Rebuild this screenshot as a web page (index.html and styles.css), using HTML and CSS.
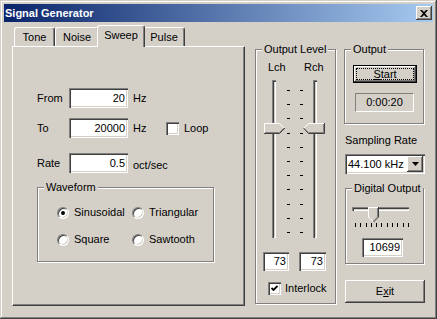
FILE: index.html
```html
<!DOCTYPE html>
<html lang="en">
<head>
<meta charset="UTF-8">
<meta name="viewport" content="width=device-width, initial-scale=1.0">
<title>Signal Generator</title>
<link rel="stylesheet" href="styles.css">
</head>
<body>
<div class="window">
  <div class="titlebar">
    <span class="title">Signal Generator</span>
    <div class="close-btn">
      <svg width="8" height="7" viewBox="0 0 8 7"><path d="M0 0 L2 0 L4 2 L6 0 L8 0 L5 3.5 L8 7 L6 7 L4 5 L2 7 L0 7 L3 3.5 Z" fill="#000"/></svg>
    </div>
  </div>

  <div class="client">
    <!-- tab control -->
    <div class="tab-col">
      <div class="tabstrip">
        <div class="tab tab-tone">Tone</div>
        <div class="tab tab-noise">Noise</div>
        <div class="tab tab-sweep active">Sweep</div>
        <div class="tab tab-pulse">Pulse</div>
      </div>
      <div class="tab-panel">
        <div class="field-row">
          <span class="field-label">From</span>
          <div class="edit">20</div>
          <span class="unit">Hz</span>
        </div>
        <div class="field-row row-to">
          <span class="field-label">To</span>
          <div class="edit">20000</div>
          <span class="unit">Hz</span>
          <div class="check-item">
            <span class="checkbox"></span>
            <span>Loop</span>
          </div>
        </div>
        <div class="field-row row-rate">
          <span class="field-label">Rate</span>
          <div class="edit">0.5</div>
          <span class="unit unit-low">oct/sec</span>
        </div>

        <div class="group waveform">
          <div class="group-label">Waveform</div>
          <div class="radio-grid">
            <div class="radio-item"><span class="radio checked"></span>Sinusoidal</div>
            <div class="radio-item"><span class="radio"></span>Triangular</div>
            <div class="radio-item"><span class="radio"></span>Square</div>
            <div class="radio-item"><span class="radio"></span>Sawtooth</div>
          </div>
        </div>
      </div>
    </div>

    <!-- output level -->
    <div class="group level">
      <div class="group-label">Output Level</div>
      <div class="chan-labels"><span>Lch</span><span>Rch</span></div>
      <div class="sliders">
        <div class="vslider">
          <div class="vtrack"></div>
          <svg class="vthumb" width="22" height="11" viewBox="0 0 22 11">
            <polygon points="0,0 16,0 21,5 16,11 0,11" fill="#d4d0c8"/>
            <polyline points="0.5,10 0.5,0.5 15.5,0.5 20.5,5.5" fill="none" stroke="#fff"/>
            <polyline points="0,10.5 15.5,10.5 21,5" fill="none" stroke="#404040"/>
            <polyline points="1,9.5 15.5,9.5 19.8,5.2" fill="none" stroke="#808080"/>
          </svg>
        </div>
        <div class="ticks ticks-l">
          <i></i><i></i><i></i><i></i><i></i><i></i><i></i><i></i><i></i><i></i><i></i>
        </div>
        <div class="ticks ticks-r">
          <i></i><i></i><i></i><i></i><i></i><i></i><i></i><i></i><i></i><i></i><i></i>
        </div>
        <div class="vslider vslider-r">
          <div class="vtrack"></div>
          <svg class="vthumb" width="22" height="11" viewBox="0 0 22 11">
            <polygon points="0,5 5,0 22,0 22,11 5,11" fill="#d4d0c8"/>
            <polyline points="0.5,5.5 5.5,0.5 21,0.5" fill="none" stroke="#fff"/>
            <polyline points="0.5,5 5.5,10.5 21.5,10.5 21.5,0" fill="none" stroke="#404040"/>
            <polyline points="1.5,5.5 5.5,9.5 20.5,9.5 20.5,1" fill="none" stroke="#808080"/>
          </svg>
        </div>
      </div>
      <div class="level-values">
        <div class="edit edit-l">73</div>
        <div class="edit edit-r">73</div>
      </div>
      <div class="check-item interlock">
        <span class="checkbox">
          <svg width="7" height="7" viewBox="0 0 7 7"><polyline points="0.5,3 2.5,5 6.5,1" fill="none" stroke="#000" stroke-width="1.8"/></svg>
        </span>
        <span>Interlock</span>
      </div>
    </div>

    <!-- right column -->
    <div class="right-col">
      <div class="group output">
        <div class="group-label">Output</div>
        <div class="btn btn-default btn-start"><span class="focus-ring"><u>S</u>tart</span></div>
        <div class="time-box">0:00:20</div>
      </div>

      <div class="rate-label">Sampling Rate</div>
      <div class="combo">
        <span class="combo-text">44.100 kHz</span>
        <span class="combo-btn">
          <svg width="7" height="4" viewBox="0 0 7 4"><polygon points="0,0 7,0 3.5,4" fill="#000"/></svg>
        </span>
      </div>

      <div class="group digital">
        <div class="group-label">Digital Output</div>
        <div class="hslider">
          <div class="htrack"></div>
          <svg class="hthumb" width="11" height="15" viewBox="0 0 11 15">
            <polygon points="0,0 11,0 11,10 5.5,15 0,10" fill="#d4d0c8"/>
            <polyline points="0.5,10 0.5,0.5 10,0.5" fill="none" stroke="#fff"/>
            <polyline points="0.5,10 5,14.5" fill="none" stroke="#fff"/>
            <polyline points="10.5,0 10.5,10 5.5,15" fill="none" stroke="#404040"/>
            <polyline points="9.5,1 9.5,10 5.5,14" fill="none" stroke="#808080"/>
          </svg>
        </div>
        <div class="hticks">
          <i></i><i></i><i></i><i></i><i></i><i></i><i></i><i></i><i></i><i></i><i></i>
        </div>
        <div class="edit edit-digital">10699</div>
      </div>

      <div class="btn btn-exit">E<u>x</u>it</div>
    </div>
  </div>
</div>
</body>
</html>
```

FILE: styles.css
```css
body {
  margin: 0;
  background: #d4d0c8;
  font-family: "Liberation Sans", Arial, sans-serif;
  font-size: 11px;
  line-height: 13px;
  color: #000;
}

/* window frame */
.window {
  width: 437px;
  height: 319px;
  box-sizing: border-box;
  padding: 4px;
  background: #d4d0c8;
  box-shadow: inset -1px -1px #404040, inset 1px 1px #d4d0c8, inset -2px -2px #808080, inset 2px 2px #fff;
}

.titlebar {
  height: 18px;
  display: flex;
  align-items: center;
  justify-content: space-between;
  padding: 0 1px 0 1px;
  background: linear-gradient(to right, #0a246a, #a6caf0);
  color: #fff;
  font-weight: bold;
}

.close-btn {
  width: 16px;
  height: 14px;
  box-sizing: border-box;
  background: #d4d0c8;
  box-shadow: inset -1px -1px #404040, inset 1px 1px #fff, inset -2px -2px #808080;
  display: flex;
  align-items: center;
  justify-content: center;
}

.client {
  display: flex;
  align-items: flex-start;
  padding: 3px 0 0 8px;
}

/* tabs */
.tab-col {
  width: 233px;
}

.tabstrip {
  display: flex;
  align-items: flex-end;
  height: 21px;
  padding-left: 2px;
}

.tab {
  box-sizing: border-box;
  height: 19px;
  padding-top: 3px;
  text-align: center;
  background: #d4d0c8;
  border-top: 1px solid #fff;
  border-left: 1px solid #fff;
  border-right: 1px solid #404040;
  border-radius: 3px 3px 0 0;
  box-shadow: inset -1px 0 #808080;
}

.tab-tone { width: 41px; }
.tab-noise { width: 44px; }
.tab-sweep { width: 44px; }
.tab-pulse { width: 42px; }

.tab.active {
  position: relative;
  z-index: 1;
  width: 48px;
  height: 22px;
  margin: 0 -2px -1px;
  padding-top: 3px;
}

.tab-panel {
  box-sizing: border-box;
  height: 260px;
  border: 1px solid;
  border-color: #fff #404040 #404040 #fff;
  box-shadow: inset -1px -1px #808080;
  padding: 41px 0 0 24px;
}

.field-row {
  display: flex;
  align-items: center;
  height: 20px;
}

.row-to { margin-top: 10px; }
.row-rate { margin-top: 15px; }

.field-label {
  width: 32px;
}

.edit {
  box-sizing: border-box;
  width: 59px;
  height: 20px;
  padding-right: 3px;
  line-height: 20px;
  text-align: right;
  background: #fff;
  box-shadow: inset 1px 1px #808080, inset 2px 2px #404040, inset -1px -1px #fff, inset -2px -2px #d4d0c8;
}

.unit {
  min-width: 28px;
  margin-left: 5px;
}

.unit-low {
  padding-top: 5px;
}

.check-item {
  display: flex;
  align-items: center;
  gap: 5px;
  margin-left: 5px;
}

.checkbox {
  width: 13px;
  height: 13px;
  box-sizing: border-box;
  background: #fff;
  box-shadow: inset 1px 1px #808080, inset 2px 2px #404040, inset -1px -1px #fff, inset -2px -2px #d4d0c8;
  display: flex;
  align-items: center;
  justify-content: center;
}

/* group boxes */
.group {
  box-sizing: border-box;
  border: 1px solid #808080;
  box-shadow: inset 1px 1px #fff, 1px 1px #fff;
}

.group-label {
  width: fit-content;
  margin: -7px 0 0 6px;
  padding: 0 2px;
  background: #d4d0c8;
}

.waveform {
  width: 177px;
  height: 75px;
  margin-top: 14px;
}

.radio-grid {
  display: grid;
  grid-template-columns: 75px auto;
  row-gap: 14px;
  padding: 12px 0 0 19px;
}

.radio-item {
  display: flex;
  align-items: center;
  gap: 5px;
  height: 13px;
}

.radio {
  width: 12px;
  height: 12px;
  box-sizing: border-box;
  border-radius: 50%;
  border: 1px solid;
  border-color: #808080 #fff #fff #808080;
  box-shadow: inset 1px 1px #404040, inset -1px -1px #d4d0c8;
  background: #fff;
  display: flex;
  align-items: center;
  justify-content: center;
}

.radio.checked::after {
  content: "";
  width: 4px;
  height: 4px;
  border-radius: 50%;
  background: #000;
}

/* output level */
.level {
  width: 81px;
  height: 255px;
  margin: 24px 0 0 10px;
}

.chan-labels {
  display: flex;
  margin-top: 5px;
  padding-left: 12px;
}

.chan-labels span:first-child {
  width: 36px;
}

.sliders {
  display: flex;
  height: 158px;
  margin: 6px 0 0 8px;
}

.vslider {
  position: relative;
  width: 22px;
}

.vtrack {
  width: 4px;
  height: 100%;
  margin-left: 8px;
  box-sizing: border-box;
  box-shadow: inset 1px 1px #808080, inset 2px 2px #404040, inset -1px -1px #fff, inset -2px -2px #d4d0c8;
}

.vslider-r .vtrack {
  margin-left: 10px;
}

.vthumb {
  position: absolute;
  top: 43px;
  left: 0;
}

.ticks {
  display: flex;
  flex-direction: column;
  justify-content: space-between;
  width: 3px;
  box-sizing: border-box;
  padding: 10px 0 5px;
}

.ticks i {
  display: block;
  height: 1px;
  background: #000;
}

.ticks-l { margin-left: 1px; }
.ticks-r { margin-left: 10px; }

.level-values {
  display: flex;
  gap: 10px;
  margin: 14px 0 0 7px;
}

.level-values .edit {
  height: 19px;
  line-height: 19px;
}

.edit-l { width: 26px; }
.edit-r { width: 27px; }

.interlock {
  margin: 11px 0 0 12px;
  gap: 4px;
}

/* right column */
.right-col {
  width: 81px;
  margin: 24px 0 0 8px;
}

.output {
  width: 80px;
  height: 75px;
}

.btn {
  box-sizing: border-box;
  background: #d4d0c8;
  box-shadow: inset -1px -1px #404040, inset 1px 1px #fff, inset -2px -2px #808080;
  display: flex;
  align-items: center;
  justify-content: center;
}

.btn-default {
  border: 1px solid #000;
  padding: 2px;
  box-shadow: inset -1px -1px #404040, inset 1px 1px #fff, inset -2px -2px #808080;
}

.btn-start {
  width: 64px;
  height: 18px;
  margin: 9px 0 0 8px;
}

.focus-ring {
  flex: 1;
  align-self: stretch;
  display: flex;
  align-items: center;
  justify-content: center;
  border: 1px dotted #000;
}

.time-box {
  box-sizing: border-box;
  width: 59px;
  height: 19px;
  margin: 10px 0 0 10px;
  border: 1px solid;
  border-color: #808080 #fff #fff #808080;
  line-height: 17px;
  text-align: center;
}

.rate-label {
  margin: 10px 0 0 1px;
}

.combo {
  box-sizing: border-box;
  width: 80px;
  height: 20px;
  margin: 7px 0 0 1px;
  padding: 2px;
  display: flex;
  align-items: stretch;
  background: #fff;
  box-shadow: inset 1px 1px #808080, inset 2px 2px #404040, inset -1px -1px #fff, inset -2px -2px #d4d0c8;
}

.combo-text {
  flex: 1;
  padding-left: 1px;
  line-height: 16px;
}

.combo-btn {
  width: 16px;
  background: #d4d0c8;
  box-shadow: inset -1px -1px #404040, inset 1px 1px #fff, inset -2px -2px #808080;
  display: flex;
  align-items: center;
  justify-content: center;
}

.digital {
  width: 79px;
  height: 76px;
  margin: 14px 0 0 1px;
}

.hslider {
  position: relative;
  width: 57px;
  height: 15px;
  margin: 12px 0 0 6px;
}

.htrack {
  height: 4px;
  margin-top: 5px;
  box-sizing: border-box;
  box-shadow: inset 1px 1px #808080, inset 2px 2px #404040, inset -1px -1px #fff, inset -2px -2px #d4d0c8;
}

.hthumb {
  position: absolute;
  top: 0;
  left: 16px;
}

.hticks {
  display: flex;
  justify-content: space-between;
  width: 54px;
  height: 4px;
  margin: 1px 0 0 9px;
}

.hticks i {
  display: block;
  width: 1px;
  background: #000;
}

.edit-digital {
  width: 41px;
  height: 19px;
  line-height: 19px;
  margin: 11px 0 0 16px;
}

.btn-exit {
  width: 80px;
  height: 23px;
  margin: 16px 0 0 1px;
}
```
